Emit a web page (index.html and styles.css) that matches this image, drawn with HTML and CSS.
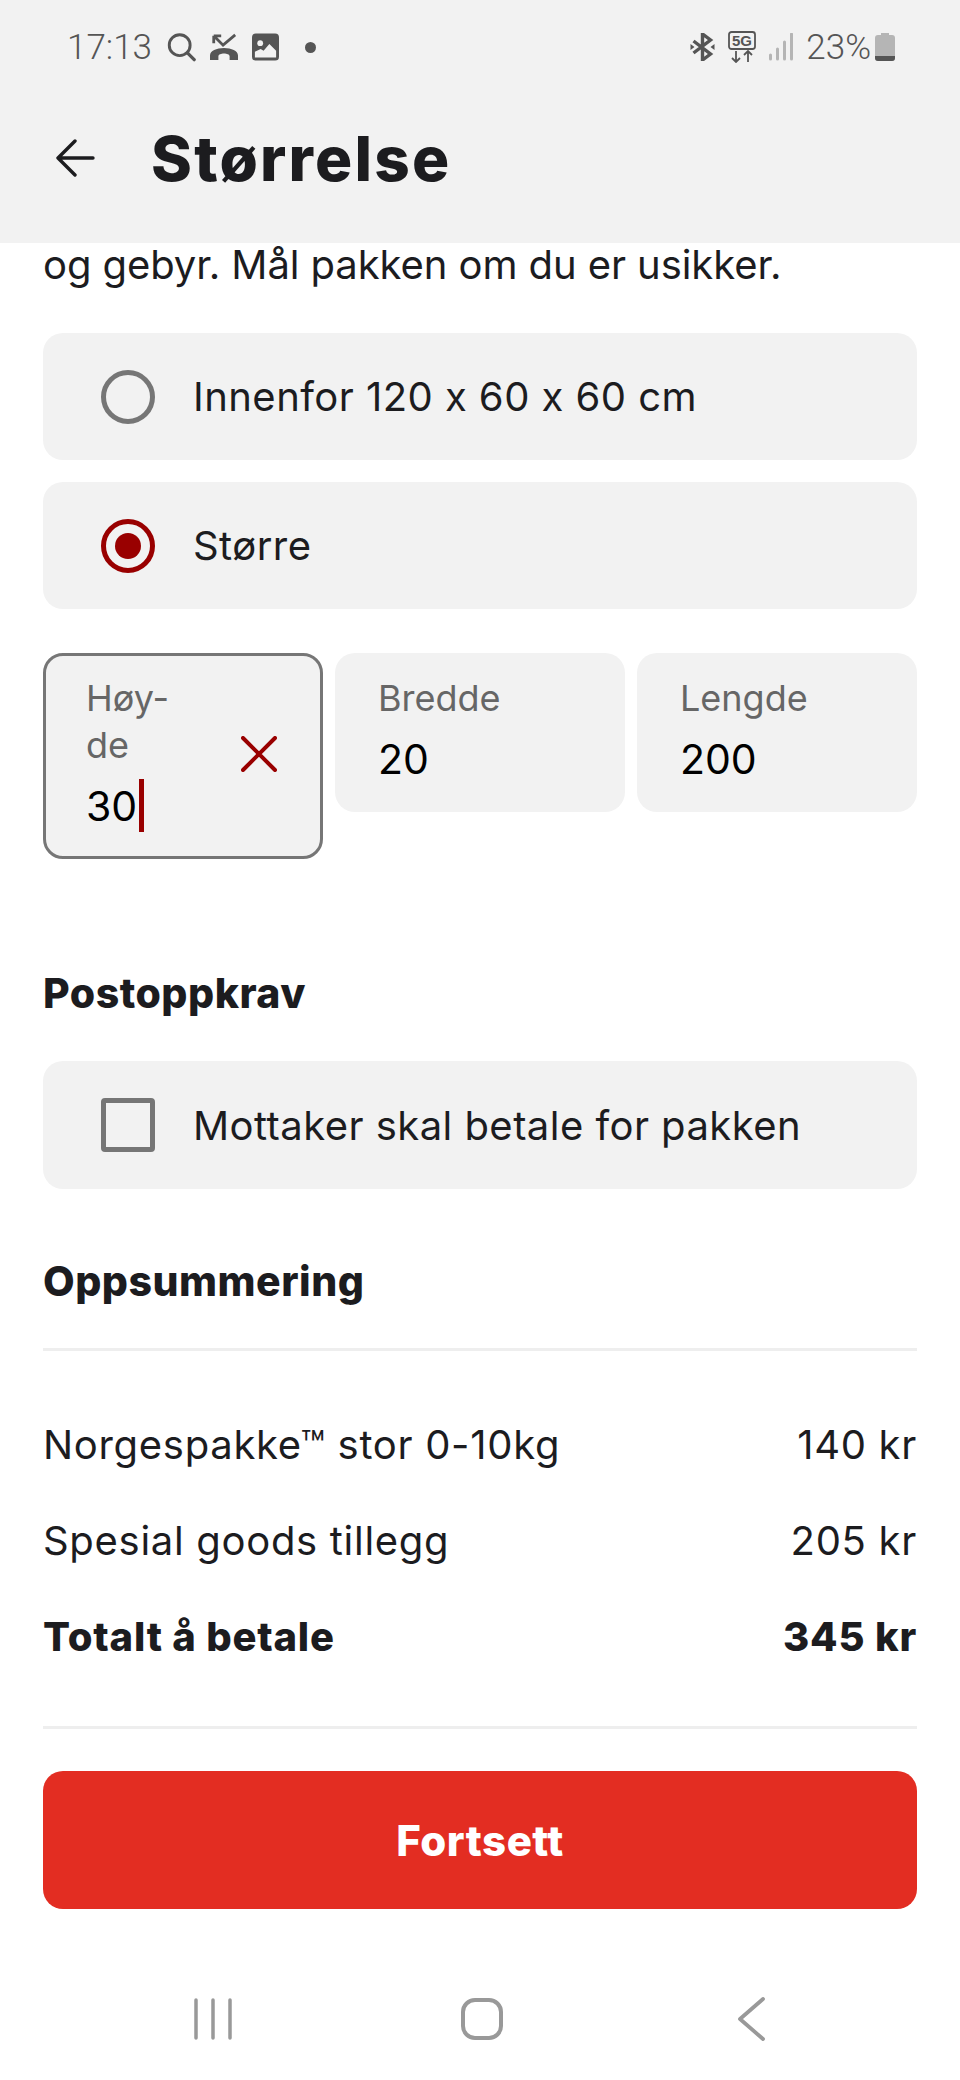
FILE: index.html
```html
<!DOCTYPE html>
<html lang="no">
<head>
  <meta charset="UTF-8">
  <title>Størrelse</title>
  <link rel="stylesheet" href="styles.css">
</head>
<body>

  <header class="top">
    <div class="status">
      <span class="status-time">17:13</span>
      <svg class="ic" width="29" height="30" viewBox="0 0 32 32"><circle cx="14" cy="14" r="11.500" fill="none" stroke="#555" stroke-width="3.200"/><path d="M22.500 22.500l7.500 7.500" stroke="#555" stroke-width="3.600" stroke-linecap="round"/></svg>
      <svg class="ic" width="30" height="28" viewBox="0 0 32 30"><path d="M5 3l10 10L28 2M5 3v8M5 3h8" fill="none" stroke="#555" stroke-width="3"/><path d="M1 29v-5c0-5 7-8 15-8s15 3 15 8v5h-9v-4c0-2-3-3-6-3s-6 1-6 3v4z" fill="#555"/></svg>
      <svg class="ic" width="27" height="28" viewBox="0 0 28 28"><rect width="28" height="28" rx="4" fill="#555"/><circle cx="8.500" cy="10" r="3" fill="#f2f2f2"/><path d="M3 25v-6l6-3 3 2 6-7 7 7v7z" fill="#f2f2f2"/></svg>
      <span class="status-dot"></span>
      <div class="status-right">
        <svg width="25" height="28" viewBox="0 0 24 28"><path d="M3 8l17 13-8 6V1l8 6L3 20" fill="none" stroke="#555" stroke-width="3.400"/><path d="M0 11l4 3-4 3zM24 11l-4 3 4 3z" fill="#555"/></svg>
        <svg class="five-g" width="28" height="32" viewBox="0 0 28 32"><rect x="1" y="1" width="26" height="17" rx="2.500" fill="none" stroke="#555" stroke-width="1.800"/><text x="14" y="15" text-anchor="middle">5G</text><path d="M8 20v11M4 27l4 4 4-4M20 31V20M16 24l4-4 4 4" fill="none" stroke="#555" stroke-width="1.800"/></svg>
        <svg width="24" height="28" viewBox="0 0 24 28"><path d="M1.500 22v4M8.500 16v10M15.500 9v17M22.500 1v25" stroke="#b5b5b5" stroke-width="3" stroke-linecap="round"/></svg>
        <span class="status-pct">23%</span>
        <svg width="20" height="28" viewBox="0 0 20 28"><path d="M6 0h8v2h3a3 3 0 0 1 3 3v20a3 3 0 0 1-3 3H3a3 3 0 0 1-3-3V5a3 3 0 0 1 3-3h3z" fill="#b5b5b5"/><path d="M0 23h20v2a3 3 0 0 1-3 3H3a3 3 0 0 1-3-3z" fill="#555"/></svg>
      </div>
    </div>
    <div class="appbar">
      <svg width="40" height="38" viewBox="0 0 40 38"><path d="M38 19H3M20 2L3 19l17 17" fill="none" stroke="#1c1c1f" stroke-width="3.400" stroke-linecap="round" stroke-linejoin="round"/></svg>
      <h1>Størrelse</h1>
    </div>
  </header>

  <main class="content">
    <p class="intro">og gebyr. Mål pakken om du er usikker.</p>

    <div class="options">
      <div class="option">
        <span class="radio"></span>
        <span>Innenfor 120 x 60 x 60 cm</span>
      </div>
      <div class="option">
        <span class="radio radio-on"></span>
        <span>Større</span>
      </div>
    </div>

    <div class="fields">
      <div class="field field-focus">
        <div>
          <div class="field-label">Høy-<br>de</div>
          <div class="field-value">30<span class="cursor"></span></div>
        </div>
        <svg width="36" height="36" viewBox="0 0 36 36"><path d="M2 2l32 32M34 2L2 34" stroke="#990000" stroke-width="4" stroke-linecap="round"/></svg>
      </div>
      <div class="field">
        <div>
          <div class="field-label">Bredde</div>
          <div class="field-value">20</div>
        </div>
      </div>
      <div class="field">
        <div>
          <div class="field-label">Lengde</div>
          <div class="field-value">200</div>
        </div>
      </div>
    </div>

    <h2 class="heading-cod">Postoppkrav</h2>
    <div class="option option-cod">
      <span class="check"></span>
      <span>Mottaker skal betale for pakken</span>
    </div>

    <h2 class="heading-sum">Oppsummering</h2>
    <div class="rule rule-top"></div>
    <div class="row"><span>Norgespakke™ stor 0-10kg</span><span>140 kr</span></div>
    <div class="row"><span>Spesial goods tillegg</span><span>205 kr</span></div>
    <div class="row row-total"><span>Totalt å betale</span><span>345 kr</span></div>
    <div class="rule rule-bottom"></div>

    <button class="submit">Fortsett</button>
  </main>

  <nav class="navbar">
    <svg width="42" height="42" viewBox="0 0 42 42"><path d="M4 2v38M21 2v38M38 2v38" stroke="#999" stroke-width="3.500" stroke-linecap="round"/></svg>
    <svg width="42" height="42" viewBox="0 0 42 42"><rect x="2" y="2" width="38" height="38" rx="12" fill="none" stroke="#999" stroke-width="4"/></svg>
    <svg width="28" height="44" viewBox="0 0 28 44"><path d="M26 2L3 22l23 20" fill="none" stroke="#999" stroke-width="3.800" stroke-linecap="round" stroke-linejoin="round"/></svg>
  </nav>

</body>
</html>
```

FILE: styles.css
```css
* {
  box-sizing: border-box;
}

body {
  margin: 0;
  width: 960px;
  height: 2080px;
  overflow: hidden;
  background-color: #ffffff;
  color: #1c1c1f;
  font-family: Inter, "Liberation Sans", sans-serif;
  font-feature-settings: "calt" 0;
}

.top {
  height: 243px;
  background-color: #f2f2f2;
}

.status {
  display: flex;
  align-items: center;
  height: 94px;
  padding: 0 65px 0 67px;
  color: #555;
}

.status-time {
  font-family: Roboto, sans-serif;
  font-size: 35px;
  font-weight: 300;
  margin-right: 15px;
}

.ic {
  margin-right: 13px;
}

.status-dot {
  width: 11px;
  height: 11px;
  margin-left: 13px;
  border-radius: 50%;
  background-color: #555;
}

.status-right {
  display: flex;
  align-items: center;
  gap: 13px;
  margin-left: auto;
}

.five-g text {
  font-family: "Liberation Sans", sans-serif;
  font-size: 15px;
  font-weight: bold;
  fill: #555;
}

.status-pct {
  margin-right: -9px;
  font-family: Roboto, sans-serif;
  font-size: 35px;
  font-weight: 300;
}

.appbar {
  display: flex;
  align-items: center;
  height: 128px;
  padding-left: 55px;
}

h1 {
  margin: 0 0 0 56px;
  font-size: 62px;
  font-weight: 800;
  letter-spacing: 2.200px;
}

.content {
  padding: 0 43px;
}

.intro {
  margin: 0 0 46px;
  font-size: 40px;
  letter-spacing: -0.080px;
  line-height: 44px;
}

.options {
  display: flex;
  flex-direction: column;
  gap: 22px;
}

.option {
  display: flex;
  align-items: center;
  gap: 38px;
  height: 127px;
  padding-left: 58px;
  background-color: #f2f2f2;
  border-radius: 20px;
  font-size: 40px;
  letter-spacing: 0.450px;
}

.radio {
  display: flex;
  align-items: center;
  justify-content: center;
  width: 54px;
  height: 54px;
  border: 5px solid #767676;
  border-radius: 50%;
}

.radio-on {
  border-color: #990000;
}

.radio-on::after {
  content: "";
  width: 26px;
  height: 26px;
  border-radius: 50%;
  background-color: #990000;
}

.check {
  width: 54px;
  height: 54px;
  border: 5px solid #767676;
  border-radius: 4px;
}

.fields {
  display: grid;
  grid-template-columns: 280px 290px 1fr;
  align-items: start;
  gap: 12px;
  margin-top: 44px;
}

.field {
  display: flex;
  align-items: center;
  justify-content: space-between;
  padding: 22px 46px 27px 43px;
  background-color: #f2f2f2;
  border-radius: 20px;
}

.field-focus {
  padding: 19px 43px 24px 40px;
  border: 3px solid #767676;
}

.field-label {
  font-size: 36px;
  line-height: 47px;
  color: #666;
}

.field-value {
  display: flex;
  align-items: center;
  height: 53px;
  margin-top: 10px;
  font-size: 41px;
  color: #000;
}

.cursor {
  width: 5px;
  height: 53px;
  margin-left: 2px;
  background-color: #990000;
}

h2 {
  margin: 0;
  font-size: 41px;
  font-weight: 800;
  letter-spacing: 0.500px;
  line-height: 50px;
}

.heading-cod {
  margin-top: 109px;
}

.option-cod {
  height: 128px;
  margin-top: 43px;
}

.heading-sum {
  margin-top: 67px;
}

.rule {
  height: 3px;
  background-color: #eeeeee;
}

.rule-top {
  margin-top: 42px;
  margin-bottom: 45px;
}

.rule-bottom {
  margin-top: 42px;
}

.row {
  display: flex;
  align-items: center;
  justify-content: space-between;
  height: 96px;
  font-size: 40px;
  letter-spacing: 0.700px;
}

.row-total {
  font-weight: 800;
  letter-spacing: 0.800px;
}

.submit {
  display: block;
  width: 100%;
  height: 138px;
  margin-top: 42px;
  border: none;
  border-radius: 20px;
  background-color: #e32d22;
  color: #ffffff;
  font-family: inherit;
  font-size: 42px;
  font-weight: 800;
  letter-spacing: 0.500px;
}

.navbar {
  display: grid;
  grid-template-columns: repeat(3, 269px);
  justify-items: center;
  align-items: center;
  margin-top: 88px;
  padding-left: 78px;
}
```
